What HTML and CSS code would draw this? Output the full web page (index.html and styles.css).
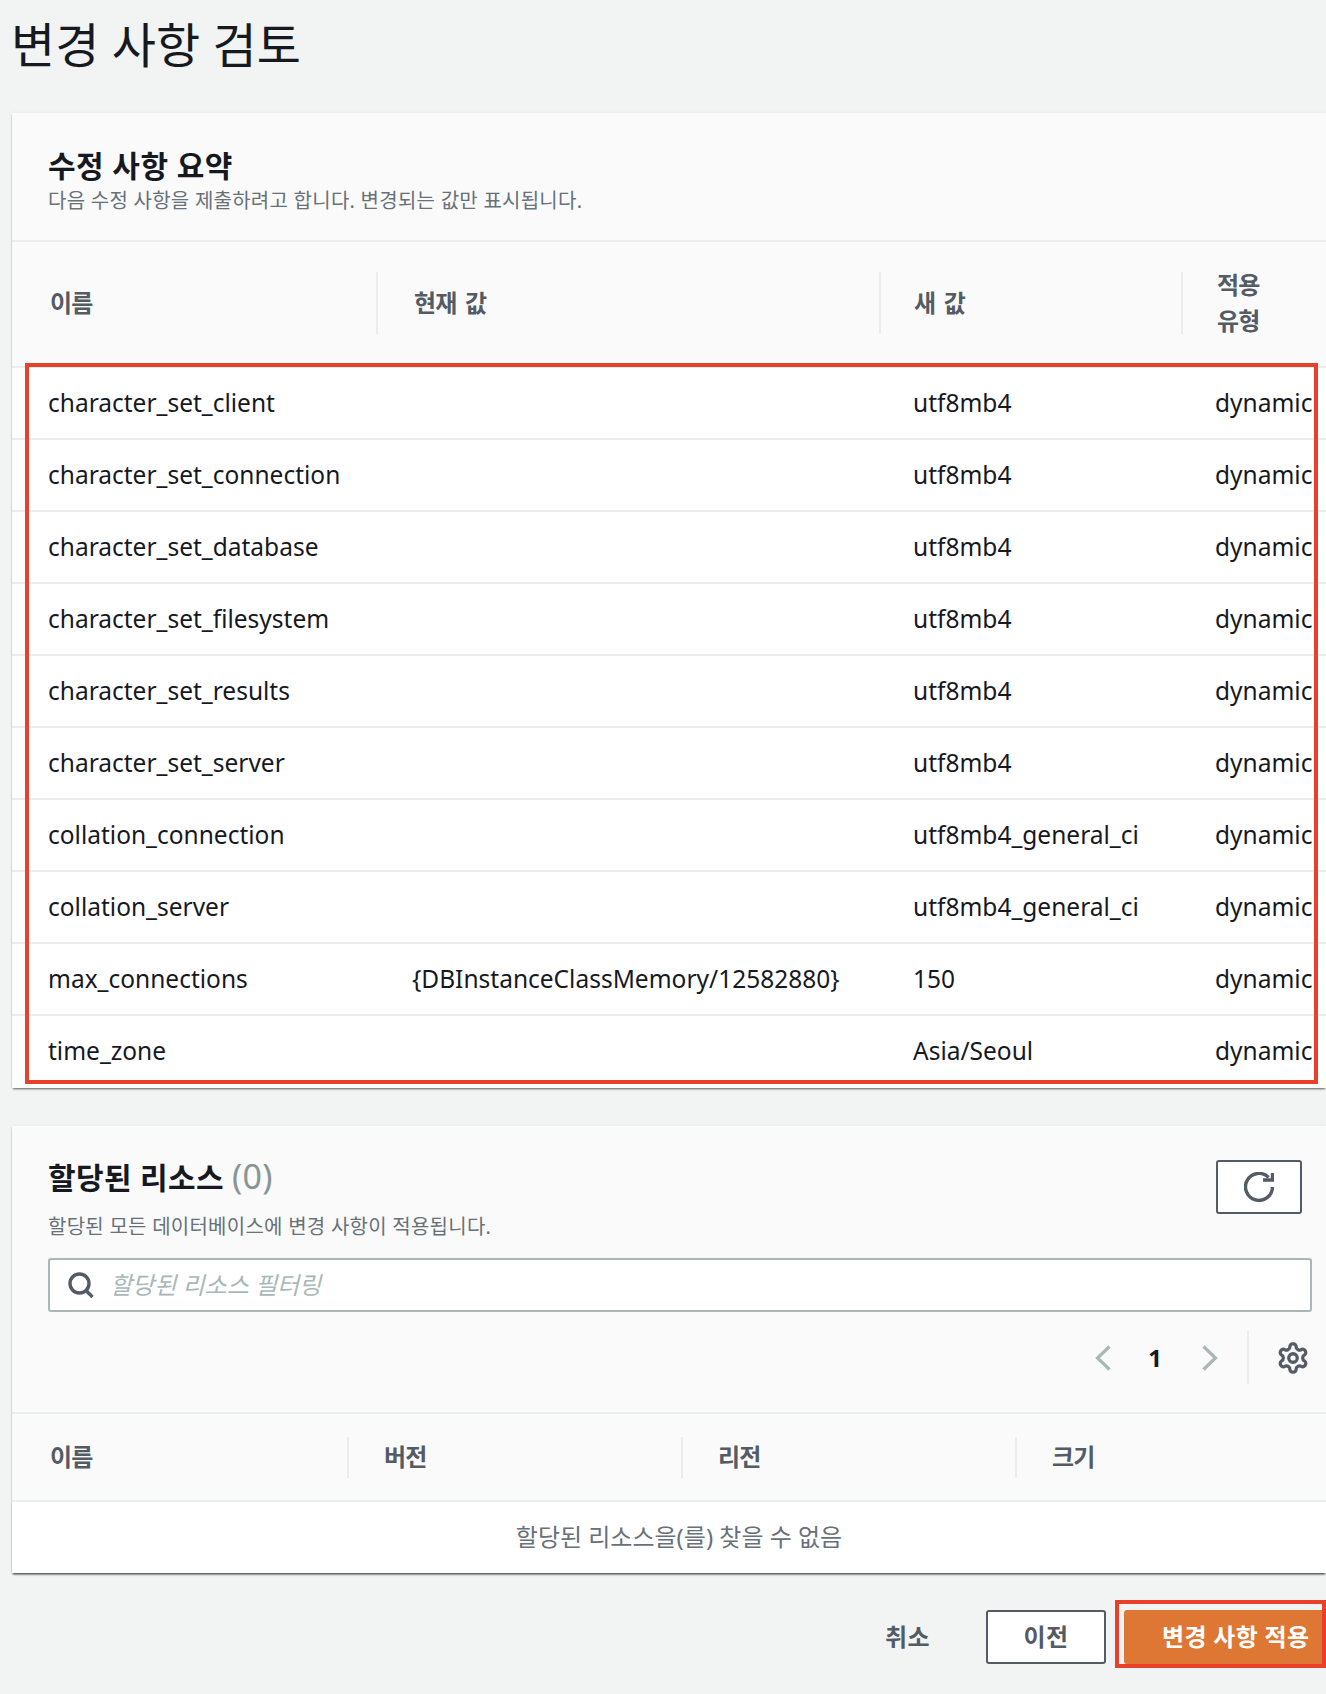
FILE: index.html
```html
<!DOCTYPE html>
<html lang="ko">
<head>
<meta charset="utf-8">
<title>변경 사항 검토</title>
<link rel="stylesheet" href="styles.css">
</head>
<body>
<main class="page">
  <h1 class="page-title">변경 사항 검토</h1>

  <section class="card card-summary">
    <header class="card-head">
      <h2 class="card-title">수정 사항 요약</h2>
      <p class="card-sub">다음 수정 사항을 제출하려고 합니다. 변경되는 값만 표시됩니다.</p>
    </header>
    <div class="grid-row summary-cols head-row">
      <div class="th first">이름</div>
      <div class="th">현재 값</div>
      <div class="th third">새 값</div>
      <div class="th narrow">적용<br>유형</div>
    </div>
    <div class="rows">
      <div class="grid-row summary-cols row"><div>character_set_client</div><div></div><div>utf8mb4</div><div>dynamic</div></div>
      <div class="grid-row summary-cols row"><div>character_set_connection</div><div></div><div>utf8mb4</div><div>dynamic</div></div>
      <div class="grid-row summary-cols row"><div>character_set_database</div><div></div><div>utf8mb4</div><div>dynamic</div></div>
      <div class="grid-row summary-cols row"><div>character_set_filesystem</div><div></div><div>utf8mb4</div><div>dynamic</div></div>
      <div class="grid-row summary-cols row"><div>character_set_results</div><div></div><div>utf8mb4</div><div>dynamic</div></div>
      <div class="grid-row summary-cols row"><div>character_set_server</div><div></div><div>utf8mb4</div><div>dynamic</div></div>
      <div class="grid-row summary-cols row"><div>collation_connection</div><div></div><div>utf8mb4_general_ci</div><div>dynamic</div></div>
      <div class="grid-row summary-cols row"><div>collation_server</div><div></div><div>utf8mb4_general_ci</div><div>dynamic</div></div>
      <div class="grid-row summary-cols row"><div>max_connections</div><div>{DBInstanceClassMemory/12582880}</div><div>150</div><div>dynamic</div></div>
      <div class="grid-row summary-cols row last"><div>time_zone</div><div></div><div>Asia/Seoul</div><div>dynamic</div></div>
      <div class="mark mark-rows"></div>
    </div>
  </section>

  <section class="card card-resources">
    <header class="res-head">
      <div class="res-titles">
        <h2 class="res-title">할당된 리소스 <span class="count">(0)</span></h2>
        <p class="res-sub">할당된 모든 데이터베이스에 변경 사항이 적용됩니다.</p>
      </div>
      <button class="icon-btn" type="button" aria-label="새로 고침">
        <svg class="refresh" viewBox="0 0 30 30" width="30" height="30" fill="none"><path d="M24.6 5.4A13.5 13.5 0 1 0 28.5 15" stroke="#545b64" stroke-width="3.4"/><path d="M19 8h9.5V1" stroke="#545b64" stroke-width="3.4"/></svg>
      </button>
    </header>
    <div class="filter">
      <svg class="search" viewBox="0 0 26 26" width="26" height="26" fill="none"><circle cx="11.5" cy="11.5" r="9.5" stroke="#545b64" stroke-width="3.4"/><path d="M17.5 18l7 7" stroke="#545b64" stroke-width="3.4"/></svg>
      <span class="placeholder">할당된 리소스 필터링</span>
    </div>
    <div class="pager">
      <svg class="chev" viewBox="0 0 16 26" width="16" height="26" fill="none"><path d="M14.5 1.5L2.5 13l12 11.5" stroke="#aab7b8" stroke-width="3.2"/></svg>
      <span class="page-num">1</span>
      <svg class="chev" viewBox="0 0 16 26" width="16" height="26" fill="none"><path d="M1.5 1.5L13.5 13l-12 11.5" stroke="#aab7b8" stroke-width="3.2"/></svg>
      <span class="pager-sep"></span>
      <svg class="gear" viewBox="0 0 24 24" width="34" height="34" fill="none" stroke="#545b64" stroke-width="2.3"><path d="M12.22 2h-.44a2 2 0 0 0-2 2v.18a2 2 0 0 1-1 1.73l-.43.25a2 2 0 0 1-2 0l-.15-.08a2 2 0 0 0-2.73.73l-.22.38a2 2 0 0 0 .73 2.73l.15.1a2 2 0 0 1 1 1.72v.51a2 2 0 0 1-1 1.74l-.15.09a2 2 0 0 0-.73 2.73l.22.38a2 2 0 0 0 2.73.73l.15-.08a2 2 0 0 1 2 0l.43.25a2 2 0 0 1 1 1.73V20a2 2 0 0 0 2 2h.44a2 2 0 0 0 2-2v-.18a2 2 0 0 1 1-1.73l.43-.25a2 2 0 0 1 2 0l.15.08a2 2 0 0 0 2.73-.73l.22-.39a2 2 0 0 0-.73-2.73l-.15-.08a2 2 0 0 1-1-1.74v-.5a2 2 0 0 1 1-1.74l.15-.09a2 2 0 0 0 .73-2.73l-.22-.38a2 2 0 0 0-2.73-.73l-.15.08a2 2 0 0 1-2 0l-.43-.25a2 2 0 0 1-1-1.73V4a2 2 0 0 0-2-2z"/><circle cx="12" cy="12" r="3"/></svg>
    </div>
    <div class="grid-row res-cols res-head-row">
      <div class="th first">이름</div>
      <div class="th">버전</div>
      <div class="th">리전</div>
      <div class="th">크기</div>
    </div>
    <div class="empty">할당된 리소스을(를) 찾을 수 없음</div>
  </section>

  <footer class="actions">
    <button class="btn-link" type="button">취소</button>
    <button class="btn-normal" type="button">이전</button>
    <div class="apply-wrap">
      <button class="btn-primary" type="button">변경 사항 적용</button>
      <div class="mark mark-btn"></div>
    </div>
  </footer>
</main>
</body>
</html>
```

FILE: styles.css
```css
* { box-sizing: border-box; }
html, body { margin: 0; padding: 0; }
body {
  background: #f2f3f3;
  color: #16191f;
  font-family: "Noto Sans", "Noto Sans CJK KR", sans-serif;
  font-size: 24px;
  overflow: hidden;
}
.page {
  width: 1326px;
  height: 1694px;
  padding-left: 12px;
}
.page-title {
  margin: 0 0 0 -1px;
  height: 113px;
  padding-top: 13px;
  font-size: 48px;
  line-height: 64px;
  font-weight: 400;
  letter-spacing: 0;
}
.card {
  background: #fafafa;
  box-shadow: 0 2px 2px -1px #545b64, -1px 0 1px -1px #879596, 0 -2px 3px -1px #eaeded;
}
.card-head {
  height: 129px;
  padding: 31px 0 0 36px;
  border-bottom: 2px solid #eaeded;
}
.card-title {
  margin: 0;
  font-size: 30px;
  line-height: 44px;
  font-weight: 700;
  letter-spacing: 0.45px;
}
.card-sub {
  margin: -1px 0 0;
  font-size: 20px;
  line-height: 28px;
  color: #687078;
  letter-spacing: 0.25px;
}
.grid-row { display: grid; align-items: center; }
.summary-cols { grid-template-columns: 364px 503px 302px 145px; }
.head-row { height: 126px; border-bottom: 2px solid #eaeded; padding-bottom: 2px; }
.th {
  display: flex;
  align-items: center;
  height: 62px;
  padding-left: 36px;
  border-left: 2px solid #eaeded;
  color: #545b64;
  font-size: 24px;
  line-height: 36px;
  font-weight: 700;
  letter-spacing: -0.8px;
  word-spacing: 3px;
}
.th.first { border-left: 0; padding-left: 38px; }
.th.third { padding-left: 33px; }
.th.narrow { padding-left: 34px; }
.rows { position: relative; background: #fff; }
.row {
  height: 72px;
  border-bottom: 2px solid #eaeded;
  font-size: 24.5px;
  line-height: 32px;
}
.row.last { border-bottom: 0; padding-bottom: 2px; }
.row > div:nth-child(1) { padding-left: 36px; }
.row > div:nth-child(2) { padding-left: 36px; white-space: nowrap; }
.row > div:nth-child(3) { padding-left: 34px; }
.row > div:nth-child(4) { padding-left: 34px; }
.mark {
  position: absolute;
  border: 4px solid #e8402a;
  pointer-events: none;
}
.mark-rows { left: 13px; right: 8px; top: -5px; bottom: 4px; }
.card-resources { margin-top: 38px; height: 447px; }
.res-head {
  height: 132px;
  padding: 30px 24px 0 36px;
  display: flex;
  justify-content: space-between;
  align-items: flex-start;
}
.res-title {
  margin: 0;
  height: 40px;
  font-size: 30px;
  line-height: 40px;
  font-weight: 700;
  letter-spacing: 0.35px;
}
.count { color: #879596; font-weight: 400; font-size: 34px; }
.res-sub {
  margin: 17px 0 0;
  font-size: 20px;
  line-height: 28px;
  color: #687078;
  letter-spacing: 0.25px;
}
.icon-btn {
  width: 86px;
  height: 54px;
  margin-top: 4px;
  background: #fff;
  border: 2px solid #545b64;
  border-radius: 3px;
  display: flex;
  align-items: center;
  justify-content: center;
  padding: 0;
}
.filter {
  margin-left: 36px;
  width: 1264px;
  height: 54px;
  background: #fff;
  border: 2px solid #aab7b8;
  border-radius: 3px;
  display: flex;
  align-items: center;
  padding-left: 18px;
  gap: 16px;
}
.placeholder {
  color: #aab7b8;
  font-style: italic;
  font-size: 24px;
  line-height: 32px;
  letter-spacing: 0;
}
.pager {
  height: 102px;
  display: flex;
  align-items: center;
  padding: 0 16px 9px 0;
  justify-content: flex-end;
  border-bottom: 2px solid #eaeded;
}
.page-num {
  width: 91px;
  padding-right: 3px;
  text-align: center;
  font-weight: 700;
  font-size: 24px;
  line-height: 32px;
}
.pager-sep {
  width: 2px;
  height: 53px;
  background: #eaeded;
  margin: 0 27px 1px 29px;
}
.res-cols { grid-template-columns: 335px 334px 334px 311px; height: 88px; border-bottom: 2px solid #eaeded; }
.res-head-row .th { height: 41px; padding-left: 35px; }
.res-head-row .th.first { padding-left: 38px; }
.empty {
  background: #fff;
  height: 71px;
  padding: 0 0 5px 20px;
  display: flex;
  align-items: center;
  justify-content: center;
  color: #687078;
  font-size: 24px;
  letter-spacing: 0;
  box-shadow: 0 2px 2px -1px #545b64;
}
.actions {
  margin-top: 37px;
  display: flex;
  align-items: center;
  justify-content: flex-end;
}
.actions button {
  font-family: inherit;
  font-size: 24px;
  font-weight: 700;
  letter-spacing: 0.3px;
  height: 54px;
  padding: 0 0 4px;
  border-radius: 3px;
  white-space: nowrap;
}
.btn-link { background: none; border: 0; color: #545b64; width: 44px; margin-right: 57px; }
.btn-normal { background: #fff; border: 2px solid #545b64; color: #545b64; width: 120px; margin-right: 18px; }
.apply-wrap { position: relative; width: 202px; }
.actions .btn-primary { background: #dd7733; border: 0; color: #fff; width: 202px; display: block; padding-left: 38px; text-align: left; }
.mark-btn { left: -9px; right: 0; top: -10px; bottom: -4px; }
```
